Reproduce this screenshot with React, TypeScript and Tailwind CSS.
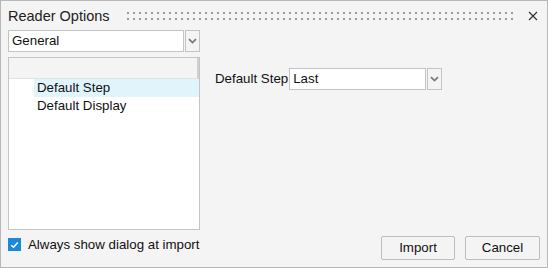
import React from "react";

const Chevron = () => (
  <svg width="9" height="6" viewBox="0 0 9 6" className="block">
    <path d="M1 1.2 L4.5 4.6 L8 1.2" fill="none" stroke="#7a7a7a" strokeWidth="1.8" />
  </svg>
);

const Combo = ({ text, w }: { text: string; w: string }) => (
  <div className={`flex h-[22px] ${w}`}>
    <div className="flex-1 bg-white border border-[#c4c4c4] flex items-center pl-[3px] text-[13.3px] text-[#111]">
      {text}
    </div>
    <div className="w-[15px] ml-[1px] border border-[#c4c4c4] bg-[#f4f4f4] flex items-center justify-center">
      <Chevron />
    </div>
  </div>
);

export default function App() {
  return (
    <div
      className="w-[548px] h-[268px] border border-[#b8b8b8] bg-[#f4f4f4] flex flex-col text-[#111]"
      style={{ fontFamily: '"Liberation Sans", Arial, sans-serif' }}
    >
      <div className="h-[29px] flex items-center pl-[7px] pr-[9px]">
        <div className="text-[14.5px] text-[#222] leading-none pt-[2px]">Reader Options</div>
        <svg className="ml-[17px] flex-1 h-[8px]" height="8">
          <defs>
            <pattern id="grip" width="6" height="6" patternUnits="userSpaceOnUse">
              <rect x="0" y="0" width="2" height="2" fill="#9c9c9c" />
            </pattern>
          </defs>
          <rect x="0" y="0" width="100%" height="8" fill="url(#grip)" />
        </svg>
        <svg width="10" height="10" viewBox="0 0 10 10" className="ml-[12px]">
          <path d="M1 1 L9 9 M9 1 L1 9" stroke="#333" strokeWidth="1.2" />
        </svg>
      </div>
      <div className="flex-1 flex px-[7px] pb-[7px]">
        <div className="w-[192px] flex flex-col">
          <Combo text="General" w="w-[192px]" />
          <div className="mt-[5px] h-[173px] border border-[#c4c4c4] bg-white flex flex-col">
            <div className="h-[21px] bg-[#f4f4f4] border-b border-[#e2e2e2] border-r-2 border-r-[#d0d0d0]" />
            <div className="h-[18px] ml-[25px] bg-[#e0f4fc] flex items-center pl-[3px] text-[13.3px]">
              Default Step
            </div>
            <div className="h-[18px] ml-[25px] flex items-center pl-[3px] text-[13.3px]">
              Default Display
            </div>
          </div>
          <div className="mt-[8px] flex items-center h-[13px]">
            <div className="w-[13px] h-[13px] bg-[#1a8ad8] flex items-center justify-center">
              <svg width="9" height="8" viewBox="0 0 9 8">
                <path d="M1.2 4.2 L3.5 6.3 L7.8 1.5" fill="none" stroke="white" strokeWidth="1.5" />
              </svg>
            </div>
            <span className="ml-[7px] text-[13.3px]">Always show dialog at import</span>
          </div>
        </div>
        <div className="flex-1 flex flex-col">
          <div className="mt-[38px] ml-[15px] flex items-center">
            <span className="text-[13.3px] mr-[1px]">Default Step</span>
            <Combo text="Last" w="w-[153px]" />
          </div>
          <div className="mt-auto flex justify-end gap-[10px]">
            <button className="w-[74px] h-[24px] border border-[#bdbdbd] rounded-[2px] bg-[#f4f4f4] text-[13.3px]">
              Import
            </button>
            <button className="w-[75px] h-[24px] border border-[#bdbdbd] rounded-[2px] bg-[#f4f4f4] text-[13.3px]">
              Cancel
            </button>
          </div>
        </div>
      </div>
    </div>
  );
}
